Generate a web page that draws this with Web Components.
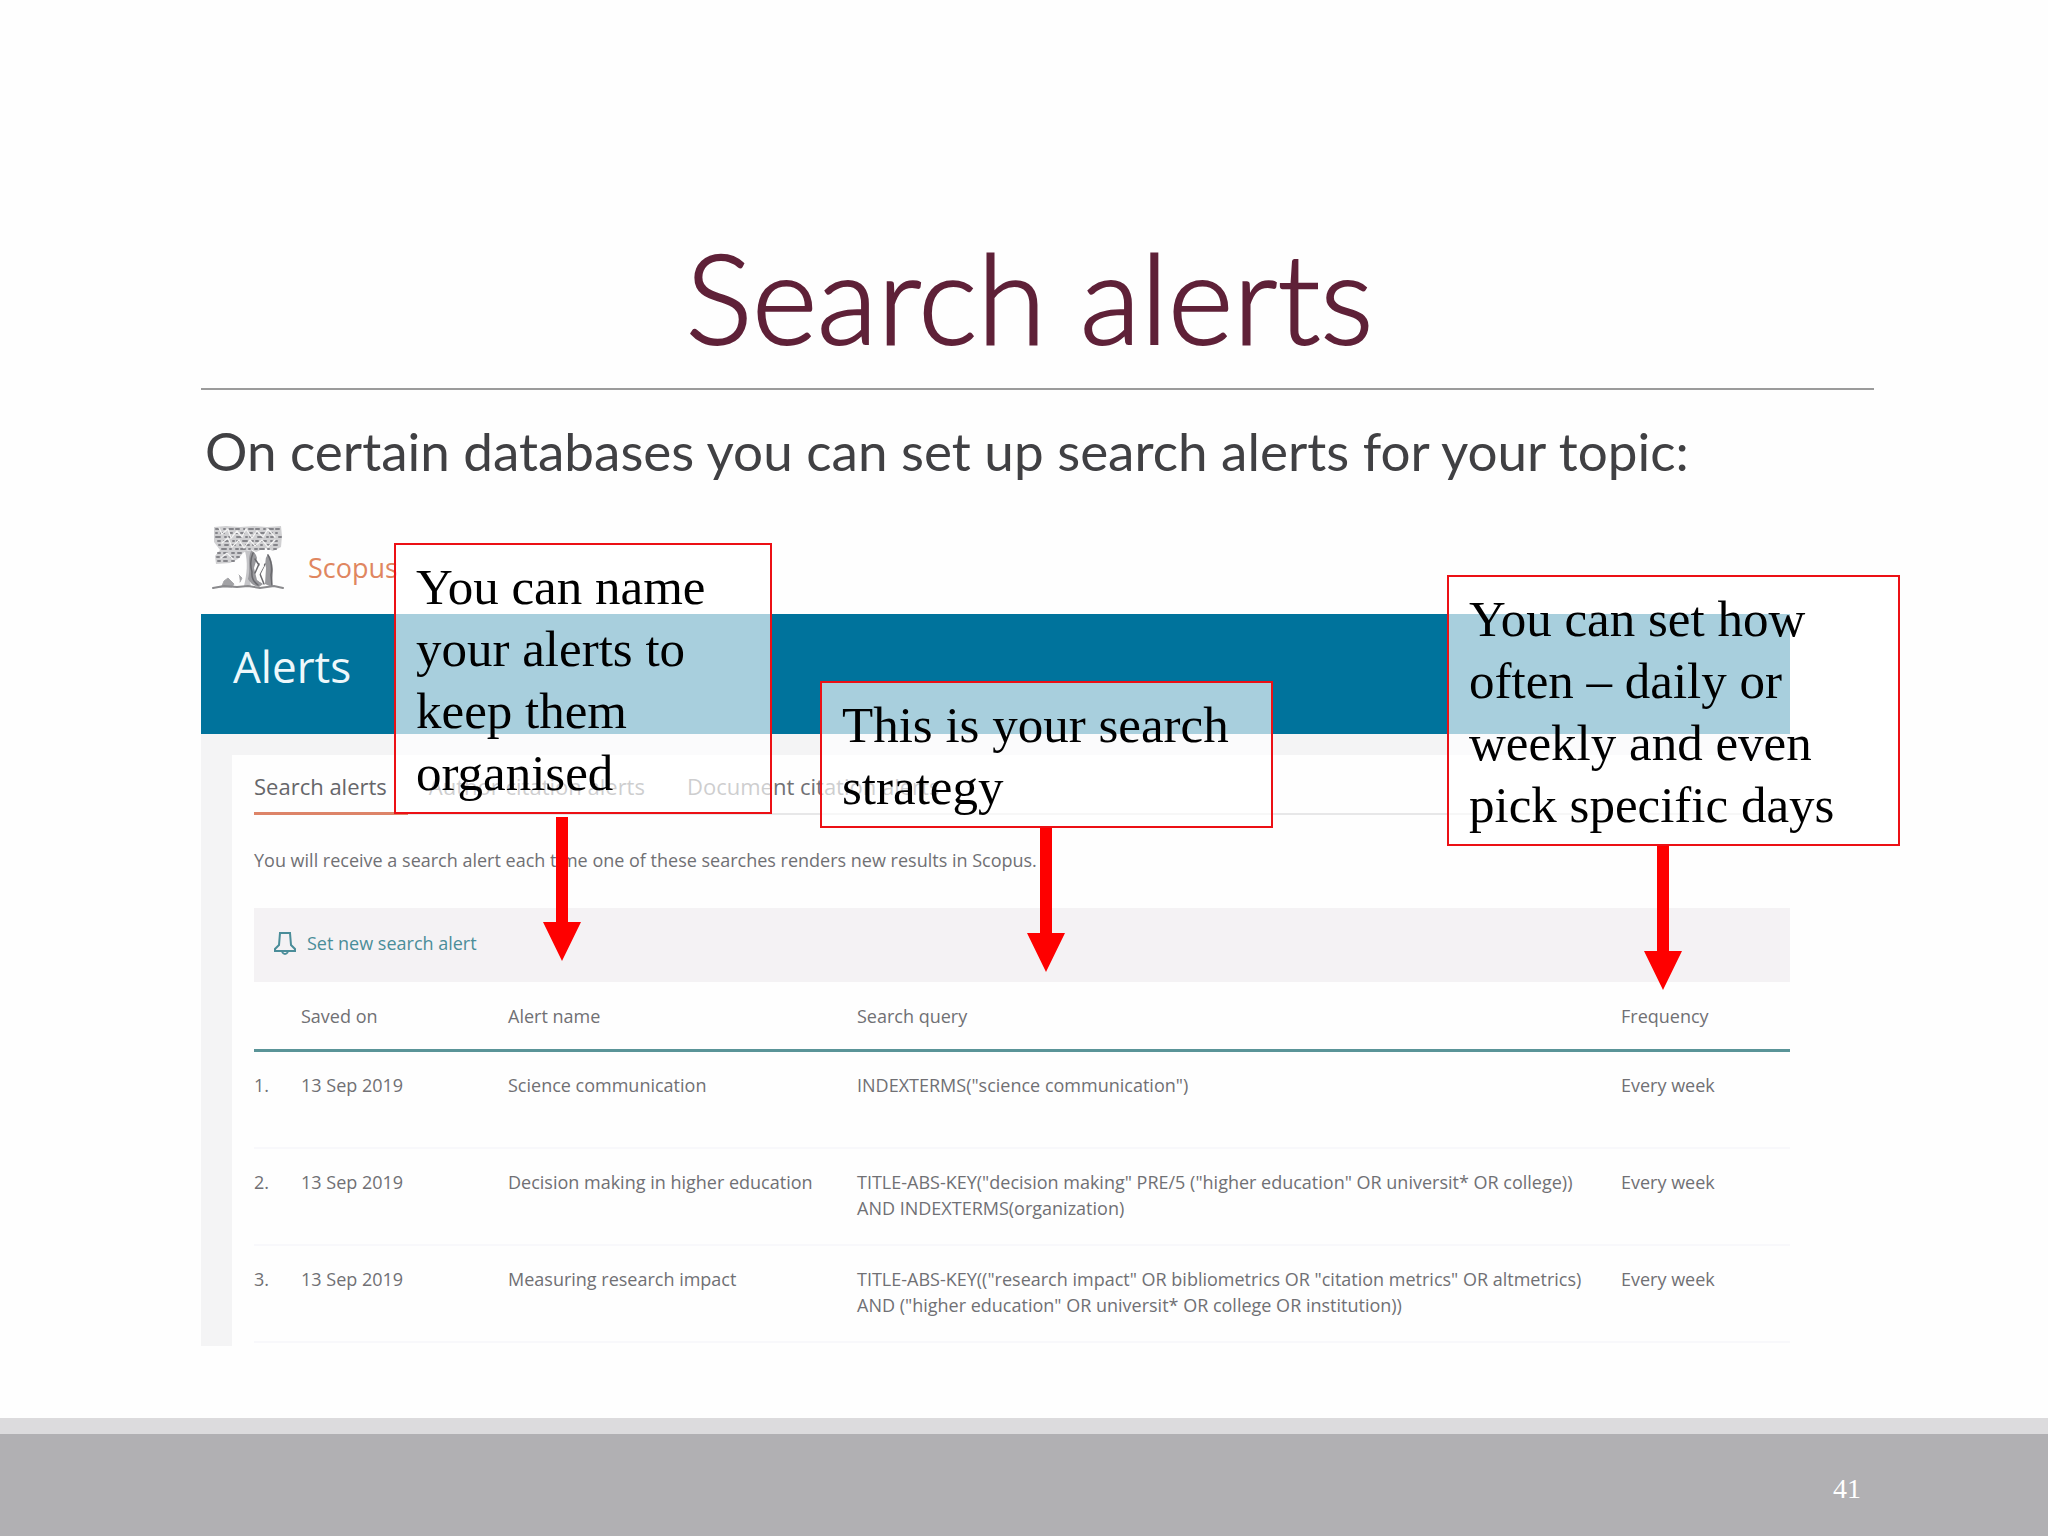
<!DOCTYPE html>
<html lang="en">
<head>
<meta charset="utf-8">
<title>Search alerts</title>
<style>
  body { margin: 0; background: #fefefe; font-family: Lato, "Liberation Sans", sans-serif; }
</style>
</head>
<body>
<training-slide number="41">
  <span slot="title">Search alerts</span>
  <span slot="lead">On certain databases you can set up search alerts for your topic:</span>
  <alerts-screen></alerts-screen>
  <note-callout style="--x:193px;--y:23px;--w:378px;--arrow:149px;--gap:3px">You can name your alerts to keep them organised</note-callout>
  <note-callout style="--x:619px;--y:161px;--w:453px;--arrow:207px">This is your search strategy</note-callout>
  <note-callout style="--x:1246px;--y:55px;--w:453px;--arrow:197px">You can set how often – daily or weekly and even pick specific days</note-callout>
</training-slide>

<script>
class ShadowElement extends HTMLElement {
  constructor() {
    super();
    this.attachShadow({ mode: "open" }).innerHTML = this.constructor.markup;
  }
}

class TrainingSlide extends ShadowElement {
  static markup = `
    <style>
      :host { display: flex; flex-direction: column; min-height: 100vh; }
      main { flex: 1; padding: 224px 174px 0 201px; }
      h1 { margin: 0; padding: 0 16px 20px 0; border-bottom: 2px solid #9b9b9b; text-align: center;
           font-size: 125px; line-height: 144px; font-weight: 300; color: #5f2138; -webkit-text-stroke: 2px #5f2138; }
      .lead { margin: 0; padding: 29px 0 0 4px; font-size: 53px; line-height: 64px; color: #404043; white-space: nowrap; }
      figure { position: relative; margin: 37px 0 0; }
      footer { background: #b1b0b3; border-top: 16px solid #dcdbdd; height: 102px; display: flex;
               justify-content: flex-end; align-items: center; padding-right: 187px;
               color: #fff; font-family: "Liberation Serif", serif; font-size: 28px; line-height: 32px; }
      footer span { margin-bottom: -8px; }
    </style>
    <main>
      <h1><slot name="title"></slot></h1>
      <p class="lead"><slot name="lead"></slot></p>
      <figure><slot></slot></figure>
    </main>
    <footer><span id="number"></span></footer>`;
  connectedCallback() {
    this.shadowRoot.getElementById("number").textContent = this.getAttribute("number");
  }
}

class NoteCallout extends ShadowElement {
  static markup = `
    <style>
      :host { position: absolute; left: var(--x); top: var(--y); width: var(--w); display: flex; flex-direction: column;
              font-family: "Liberation Serif", serif; font-size: 51px; line-height: 62px; color: #000; }
      .box { border: 2px solid #ec1015; background: rgba(255,255,255,.66); padding: 11px 17px 8px 20px; }
      svg { width: 38px; height: 144px; margin: var(--gap, 0) 0 0 var(--arrow); fill: #fe0000; }
    </style>
    <div class="box"><slot></slot></div>
    <svg viewBox="0 0 38 144" aria-hidden="true"><path d="M13 0H25V105H38L19 144L0 105H13Z"/></svg>`;
}

class TreeLogo extends ShadowElement {
  static markup = `
    <style>:host { display: block; width: 76px; height: 68px; } svg { display: block; }</style>
    <svg width="76" height="68" viewBox="0 0 76 68" fill="none" stroke-linecap="round" aria-hidden="true">
      <path d="M4 3L16 2L30 3L44 2L57 3L71 2L72 12L71 23L63 27L55 24L46 28L40 25L33 29L28 35L20 39L6 40L5 32L10 26L4 18Z" fill="#d0d0d2"/>
      <g stroke="#85858a" stroke-width="2">
        <path d="M6 5h64" stroke-dasharray="3 5 1 4 4 3"/>
        <path d="M6 9h64" stroke-dasharray="1 4 3 6 2 4"/>
        <path d="M6 13h65" stroke-dasharray="4 5 1 3 2 6"/>
        <path d="M8 17h62" stroke-dasharray="2 4 4 5 1 3"/>
        <path d="M9 21h60" stroke-dasharray="1 5 3 4 3 5"/>
        <path d="M12 25h54" stroke-dasharray="4 4 1 5 2 3"/>
        <path d="M8 29h26M7 33h22M8 37h16" stroke-dasharray="2 4 3 5"/>
      </g>
      <path d="M9 4l3 6 6-5 3 9 6-7 5 6 4-8 6 9 5-7 6 6 5-8 7 8M12 19l6-5 4 9 7-7 5 8 6-8 5 6 7-6 6 7 7-7M11 34l6-5 6 6" stroke="#f4f4f4" stroke-width="1.2"/>
      <path d="M35 27C38 38 37 50 34 62L41 63C39 52 40 38 42 26Z" fill="#c4c4c7"/>
      <path d="M41 27C37 36 41 44 38 55Q42 62 49 63L53 60L47 56L44 44L47 34Q45 27 41 27ZM58 30Q54 35 56 44L55 60L62 63L63 46Q62 34 58 30Z" fill="#98989c"/>
      <path d="M43 29Q39 38 42 48Q41 56 48 61M58 31Q63 40 61 51L62 62M49 40l-4 9M55 40l-5 10 4 10M45 35l4 6" stroke="#68686c" stroke-width="1.5"/>
      <path d="M50 34l3 8-5 9 2 6" stroke="#fafafa" stroke-width="2"/>
      <path d="M12 62L14 57L18 54L24 60L22 63H10ZM29 51l3 3-2 4" fill="#a2a2a5" stroke="#a8a8ab"/>
      <path d="M3 64L14 62L27 63L38 62L50 64L64 62L73 64" stroke="#8a8a8d" stroke-width="2"/>
    </svg>`;
}

class AlertsScreen extends ShadowElement {
  static markup = `
    <style>
      :host { display: block; width: 95%; color: #707074; font-family: "Open Sans", "Liberation Sans", sans-serif; font-size: 18px; line-height: 26px; }
      .brand { display: flex; height: 94px; color: #e08660; font-size: 27px; line-height: 32px; }
      tree-logo { margin: 4px 0 0 9px; }
      .brand a { margin: 32px 0 0 22px; color: inherit; text-decoration: none; }
      h2 { margin: 0; height: 120px; padding-left: 32px; background: #00739c; color: #eef8fb;
           font-size: 44px; line-height: 104px; font-weight: 400; }
      .page { background: #f4f4f5; padding: 21px 0 0 31px; }
      .panel { background: #fefefe; padding: 12px 0 3px 22px; }
      nav { display: flex; border-bottom: 2px solid #e7e7e8; height: 46px; gap: 21px; }
      nav a { box-sizing: border-box; height: 48px; padding: 5px 21px 0 0; color: inherit; text-decoration: none;
              font-size: 22px; line-height: 28px; white-space: nowrap; }
      nav a[aria-current] { color: #66666a; border-bottom: 3px solid #dd8468; }
      p { margin: 0; padding: 32px 0 35px; }
      .tools { background: #f4f2f4; height: 74px; display: flex; align-items: center; padding-left: 19px; }
      button { display: flex; align-items: center; gap: 10px; margin: 0 0 4px; padding: 0; border: 0; background: none;
               font: inherit; color: #4a8d99; }
      table { width: 100%; border-collapse: collapse; table-layout: fixed; }
      th, td { padding: 0; font-weight: 400; text-align: left; vertical-align: top; white-space: nowrap; }
      th { height: 67px; border-bottom: 3px solid #5a9498; vertical-align: middle; }
      td { box-sizing: border-box; height: 97px; padding-top: 20px; border-bottom: 2px solid #f8f8fb; }
      .n { width: 47px; } .d { width: 207px; } .a { width: 349px; } .q { width: 764px; }
    </style>
    <div class="brand"><tree-logo></tree-logo><a href="#">Scopus</a></div>
    <h2>Alerts</h2>
    <div class="page"><div class="panel">
      <nav><a href="#" aria-current="page">Search alerts</a><a href="#">Author citation alerts</a><a href="#">Document citation alerts</a></nav>
      <p>You will receive a search alert each time one of these searches renders new results in Scopus.</p>
      <div class="tools"><button type="button">
        <svg width="24" height="24" viewBox="0 0 24 24" fill="none" stroke="#4a8d99" stroke-width="2" aria-hidden="true"><path d="M2 20V18L6 14L7 2H17L18 14L22 18V20ZM9 21Q12 25 15 21"/></svg>
        Set new search alert</button></div>
      <table>
        <thead><tr><th class="n"></th><th class="d">Saved on</th><th class="a">Alert name</th><th class="q">Search query</th><th>Frequency</th></tr></thead>
        <tbody>
          <tr><td>1.</td><td>13 Sep 2019</td><td>Science communication</td><td>INDEXTERMS("science communication")</td><td>Every week</td></tr>
          <tr><td>2.</td><td>13 Sep 2019</td><td>Decision making in higher education</td><td>TITLE-ABS-KEY("decision making" PRE/5 ("higher education" OR universit* OR college))<br>AND INDEXTERMS(organization)</td><td>Every week</td></tr>
          <tr><td>3.</td><td>13 Sep 2019</td><td>Measuring research impact</td><td>TITLE-ABS-KEY(("research impact" OR bibliometrics OR "citation metrics" OR altmetrics)<br>AND ("higher education" OR universit* OR college OR institution))</td><td>Every week</td></tr>
        </tbody>
      </table>
    </div></div>`;
}

customElements.define("tree-logo", TreeLogo);
customElements.define("alerts-screen", AlertsScreen);
customElements.define("note-callout", NoteCallout);
customElements.define("training-slide", TrainingSlide);
</script>
</body>
</html>
